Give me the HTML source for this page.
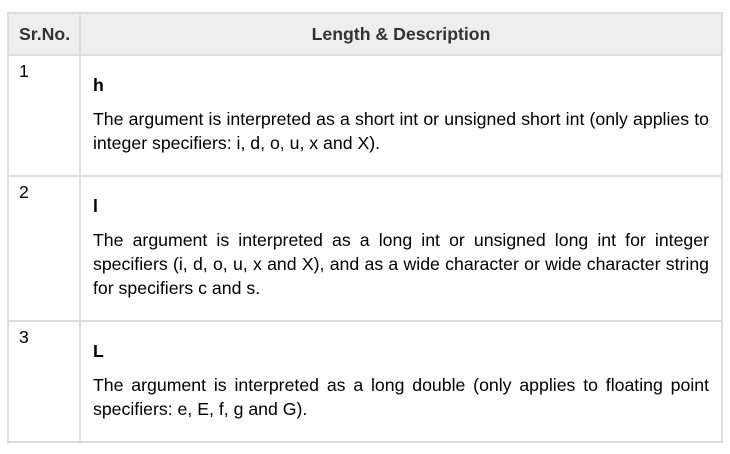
<!DOCTYPE html>
<html><head><style>
body{margin:0;background:#fff;font-family:"Liberation Sans",sans-serif;font-size:17.7px;color:#000;}
table{position:absolute;left:7px;top:12px;width:716px;border-collapse:collapse;}
td,th{border:2px solid #ddd;vertical-align:top;line-height:24px;}
th{background:#eee;height:40px;padding:0;vertical-align:middle;font-weight:bold;color:#333;}
th.n{text-align:left;padding-left:10px;width:60px;}
td.n{padding:3px 10px;}
td.d{padding:7px 12px 10px 12px;text-align:justify;}
p{margin:10px 0;}
b{display:block;margin-top:10px;}
</style></head><body>
<table>
<tr><th class="n">Sr.No.</th><th>Length &amp; Description</th></tr>
<tr><td class="n">1</td><td class="d"><b>h</b><p>The argument is interpreted as a short int or unsigned short int (only applies to integer specifiers: i, d, o, u, x and X).</p></td></tr>
<tr><td class="n">2</td><td class="d"><b>l</b><p>The argument is interpreted as a long int or unsigned long int for integer specifiers (i, d, o, u, x and X), and as a wide character or wide character string for specifiers c and s.</p></td></tr>
<tr><td class="n">3</td><td class="d"><b>L</b><p>The argument is interpreted as a long double (only applies to floating point specifiers: e, E, f, g and G).</p></td></tr>
</table>
</body></html>
